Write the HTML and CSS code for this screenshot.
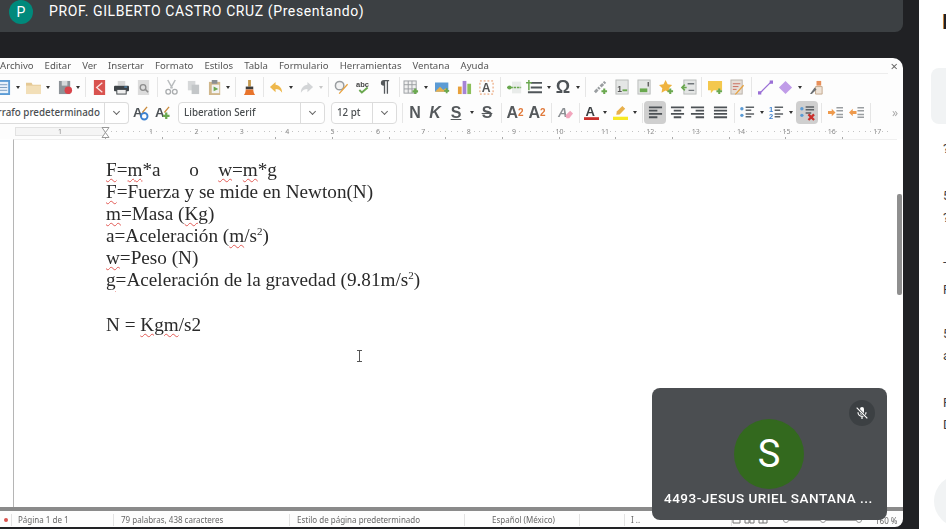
FILE: index.html
```html
<!DOCTYPE html>
<html lang="es">
  <head>
    <meta charset="UTF-8" />
    <meta name="viewport" content="width=device-width, initial-scale=1.0" />
    <title>Reunión</title>
    <link rel="stylesheet" href="styles.css">
  </head>
  <body>
    <div class="stage">
      <header class="presenter">
        <span class="presenter-avatar">P</span>
        <span class="presenter-name">PROF. GILBERTO CASTRO CRUZ (Presentando)</span>
      </header>

      <section class="writer">
        <nav class="menu">
          <span>Archivo</span><span>Editar</span><span>Ver</span><span>Insertar</span><span>Formato</span><span>Estilos</span><span>Tabla</span><span>Formulario</span><span>Herramientas</span><span>Ventana</span><span>Ayuda</span>
          <span class="close">×</span>
        </nav>

        <div class="bar bar-top">
          <span class="b"><svg viewBox="0 0 16 16"><rect x="1" y="0" width="14" height="16" fill="#5b9bd5"/><rect x="3" y="2" width="10" height="12" fill="#e8f1fa"/><path d="M4 5h8M4 8h8M4 11h8" stroke="#7a9cc0"/></svg></span>
          <span class="a"></span>
          <span class="b"><svg viewBox="0 0 16 16"><path d="M0 3h6l1 2h9v10H0z" fill="#e5c995"/><path d="M0 6h16v9H0z" fill="#f2dfb8"/></svg></span>
          <span class="a"></span>
          <span class="b ml2"><svg viewBox="0 0 16 16"><rect x="1" y="1" width="12" height="14" fill="#8d9398"/><rect x="4" y="1" width="6" height="5" fill="#d5d8da"/><circle cx="11" cy="11" r="4" fill="#d9434a"/></svg></span>
          <span class="a ml-2"></span>
          <span class="s"></span>
          <span class="b"><svg viewBox="0 0 16 16"><rect x="2" y="0" width="12" height="16" fill="#d9534f"/><path d="M11 3 5 8l6 5" fill="none" stroke="#fbe3e2" stroke-width="1.4"/></svg></span>
          <span class="b"><svg viewBox="0 0 16 16"><rect x="4" y="1" width="8" height="5" fill="#d8d8d8"/><rect x="0" y="6" width="16" height="6" rx="1" fill="#3d4347"/><rect x="3" y="10" width="10" height="5" fill="#eee" stroke="#3d4347"/><rect x="11" y="7" width="3" height="1" fill="#5aa6e0"/></svg></span>
          <span class="b"><svg viewBox="0 0 16 16"><rect x="2" y="0" width="12" height="16" fill="#dcdcdc"/><circle cx="7.5" cy="8" r="3" fill="none" stroke="#8c8c8c" stroke-width="1.4"/><path d="m10 10 3 3" stroke="#8c8c8c" stroke-width="1.6"/></svg></span>
          <span class="s"></span>
          <span class="b"><svg viewBox="0 0 16 16"><path d="M4 0l5 9M12 0 7 9" stroke="#b9bcbe" stroke-width="1.6"/><circle cx="4.5" cy="12.5" r="2.5" fill="none" stroke="#a9acae" stroke-width="1.4"/><circle cx="11.5" cy="12.5" r="2.5" fill="none" stroke="#a9acae" stroke-width="1.4"/></svg></span>
          <span class="b"><svg viewBox="0 0 16 16"><rect x="2" y="1" width="8" height="10" fill="#d6d8d9"/><rect x="6" y="5" width="8" height="10" fill="#c3c6c8"/></svg></span>
          <span class="b"><svg viewBox="0 0 16 16"><rect x="1" y="2" width="12" height="14" fill="#d0b78c"/><rect x="4" y="0" width="6" height="4" fill="#8b8f92"/><rect x="4" y="5" width="8" height="9" fill="#f2f2f2"/><path d="m6 7 5 2.500-5 2.500z" fill="#6aa84f"/></svg></span>
          <span class="a ml-2"></span>
          <span class="s"></span>
          <span class="b"><svg viewBox="0 0 16 16"><rect x="6.500" y="0" width="3" height="7" fill="#c69a4f"/><rect x="4" y="7" width="8" height="3" fill="#3c3c3c"/><path d="M2 16c1-1 2-4 2-6h8c0 2 1 5 2 6z" fill="#e8742c"/></svg></span>
          <span class="s"></span>
          <span class="b ml-1"><svg viewBox="0 0 16 16"><path d="M7 2 1 7.500 7 13V9.500c3 0 5 1 7 4 0-5-3-8-7-8.500z" fill="#eeb84c"/></svg></span>
          <span class="a"></span>
          <span class="b"><svg viewBox="0 0 16 16"><path d="M9 2l6 5.500L9 13V9.500c-3 0-5 1-7 4 0-5 3-8 7-8.500z" fill="#d3d5d7"/></svg></span>
          <span class="a faint"></span>
          <span class="s"></span>
          <span class="b ml-1"><svg viewBox="0 0 16 16"><circle cx="6" cy="6" r="4.500" fill="#f3f3f3" stroke="#9a9ea1" stroke-width="1.6"/><path d="M15 5 6 15l-1-1 9-10z" fill="#e8a13c"/></svg></span>
          <span class="b"><svg viewBox="0 0 18 16"><text x="0" y="7.500" class="t-abc">abc</text><path d="m4 11 3 3 7-6" fill="none" stroke="#6aa84f" stroke-width="2.200"/></svg></span>
          <span class="b pil">¶</span>
          <span class="s"></span>
          <span class="b ml-2"><svg viewBox="0 0 16 16"><rect x="0" y="1" width="13" height="13" fill="#f0f0f0" stroke="#9a9ea1"/><path d="M4.500 1v13M8.500 1v13M0 5h13M0 9.500h13" stroke="#9a9ea1"/><path d="M12 9v6M9 12h6" stroke="#6aa84f" stroke-width="2.400"/></svg></span>
          <span class="a"></span>
          <span class="b ml1"><svg viewBox="0 0 18 16"><rect x="0" y="2" width="16" height="11" fill="#5b9bd5"/><path d="M0 13 6 7l4 4 3-2 3 4z" fill="#e8b04c"/><path d="M14 9v6M11 12h6" stroke="#6aa84f" stroke-width="2.200"/></svg></span>
          <span class="b"><svg viewBox="0 0 16 16"><rect x="1" y="7" width="4" height="8" fill="#e8a13c"/><rect x="6" y="1" width="4" height="14" fill="#a583d6"/><rect x="11" y="4" width="4" height="11" fill="#8cbf5a"/></svg></span>
          <span class="b"><svg viewBox="0 0 16 16"><rect x="1" y="1" width="14" height="14" fill="none" stroke="#e8905a" stroke-dasharray="2 2"/><text x="3" y="13" class="t-box">A</text></svg></span>
          <span class="s"></span>
          <span class="b"><svg viewBox="0 0 18 16"><rect x="6" y="1" width="11" height="14" fill="#e9ecea"/><path d="M0 8h17" stroke="#6aa84f" stroke-width="2" stroke-dasharray="3 1"/><circle cx="3" cy="8" r="2.500" fill="#6aa84f"/></svg></span>
          <span class="b ml-2"><svg viewBox="0 0 16 16"><path d="M4 3h12M4 8h12M1 13h15" stroke="#50565a" stroke-width="2"/><path d="M2 0v6M-1 3h6M2 5v6" stroke="#6aa84f" stroke-width="1.600"/></svg></span>
          <span class="a"></span>
          <span class="b ml-1 omega">Ω</span>
          <span class="a"></span>
          <span class="s"></span>
          <span class="b ml1"><svg viewBox="0 0 16 16"><path d="M2 13 7 8M8 7l5-5" stroke="#9a9ea1" stroke-width="3" stroke-dasharray="4 1"/><path d="M12 9v6M9 12h6" stroke="#6aa84f" stroke-width="2.200"/></svg></span>
          <span class="b"><svg viewBox="0 0 16 16"><rect x="1" y="0" width="13" height="15" fill="#e4e6e5" stroke="#b8bbba"/><text x="2.500" y="13" class="t-num">1</text><path d="M8 11h5" stroke="#6aa84f" stroke-width="2"/></svg></span>
          <span class="b"><svg viewBox="0 0 16 16"><rect x="1" y="0" width="13" height="15" fill="#e4e6e5" stroke="#b8bbba"/><rect x="3" y="9" width="8" height="4" fill="#6aa84f"/><path d="M12 2v5" stroke="#555" stroke-width="1.400"/></svg></span>
          <span class="b"><svg viewBox="0 0 16 16"><path d="M7 0l2.200 4.600 4.800.700-3.500 3.400.8 4.800L7 11.200 2.700 13.500l.8-4.800L0 5.300l4.800-.700z" fill="#efb33f"/><path d="M12 9v6M9 12h6" stroke="#6aa84f" stroke-width="2.200"/></svg></span>
          <span class="b ml1"><svg viewBox="0 0 16 16"><rect x="2" y="0" width="13" height="15" fill="#e4e6e5" stroke="#b8bbba"/><path d="M6 4h7M7 11h6" stroke="#70767a" stroke-width="1.400"/><path d="M0 8h5M3 5 0 8l3 3" fill="none" stroke="#6aa84f" stroke-width="1.800"/></svg></span>
          <span class="s ml-2"></span>
          <span class="b"><svg viewBox="0 0 16 16"><path d="M0 1h15v10H6l-3 3v-3H0z" fill="#f4c84d"/><path d="M12 9v6M9 12h6" stroke="#6aa84f" stroke-width="2.200"/></svg></span>
          <span class="b"><svg viewBox="0 0 16 16"><rect x="1" y="0" width="12" height="15" fill="#e6dfd8" stroke="#b8b0a8"/><path d="M3 4h8M3 7h6M3 10h4" stroke="#c96a5a"/><path d="m15 6-8 9-2 1 1-2 8-9z" fill="#e8a13c"/></svg></span>
          <span class="s"></span>
          <span class="b"><svg viewBox="0 0 16 16"><path d="M2 14 14 2" stroke="#9a6fd6" stroke-width="1.400"/><rect x="0" y="12" width="3.500" height="3.500" fill="#9a6fd6"/><rect x="12.500" y="0.500" width="3.500" height="3.500" fill="#9a6fd6"/></svg></span>
          <span class="b ml-2"><svg viewBox="0 0 16 16"><path d="M8 1l7 7-7 7-7-7z" fill="#c09ce8"/></svg></span>
          <span class="a"></span>
          <span class="b ml1"><svg viewBox="0 0 16 16"><path d="M8 1h5v5H8z" fill="#e8905a"/><path d="M7 7h7v8H7z" fill="#efe4d8" stroke="#c2a78c"/><path d="M1 15 6 8l2 2-5 5z" fill="#6b6f72"/></svg></span>
        </div>

        <div class="bar bar-format">
          <div class="combo combo-style">
            <span class="combo-text clip-left">Párrafo predeterminado</span>
            <span class="combo-arrow"></span>
          </div>
          <span class="b"><svg viewBox="0 0 16 16"><text x="0" y="13" class="t-big">A</text><circle cx="12" cy="12" r="3.500" fill="none" stroke="#3e82d0" stroke-width="2"/><path d="m10 8 5-6" stroke="#c98a3c" stroke-width="1.400"/></svg></span>
          <span class="b"><svg viewBox="0 0 16 16"><text x="0" y="13" class="t-big">A</text><path d="M12 8v7M8.500 11.500h7" stroke="#6aa84f" stroke-width="2.400"/><path d="m10 8 5-6" stroke="#c98a3c" stroke-width="1.400"/></svg></span>
          <div class="combo combo-font">
            <span class="combo-text">Liberation Serif</span>
            <span class="combo-arrow"></span>
          </div>
          <div class="combo combo-size">
            <span class="combo-text">12 pt</span>
            <span class="combo-arrow"></span>
          </div>
          <span class="s s-first"></span>
          <span class="b g-n">N</span>
          <span class="b g-k">K</span>
          <span class="b g-s">S</span>
          <span class="a ml1"></span>
          <span class="b g-strike">S</span>
          <span class="s"></span>
          <span class="b g-a">A<sup>2</sup></span>
          <span class="b g-a">A<sub>2</sub></span>
          <span class="s"></span>
          <span class="b"><svg viewBox="0 0 16 16"><text x="0" y="13" class="t-big t-grey">A</text><path d="m8 11 5-5 3 3-4 5H9z" fill="#f2a6bd"/></svg></span>
          <span class="s"></span>
          <span class="b ml-2"><svg viewBox="0 0 16 16"><text x="1.500" y="11.500" class="t-big t-dark">A</text><rect x="0" y="13" width="16" height="3" fill="#c9302c"/></svg></span>
          <span class="a ml-1"></span>
          <span class="b"><svg viewBox="0 0 16 16"><path d="M10 1l3 3-6 6-3.500.5.500-3.500z" fill="#e8b04c"/><rect x="0" y="12.500" width="16" height="3.500" fill="#f7e925"/></svg></span>
          <span class="a"></span>
          <span class="s"></span>
          <span class="b on ml-1"><svg viewBox="0 0 16 16"><path d="M1 2.500h14M1 6h9M1 9.500h14M1 13h9" stroke="#4d5256" stroke-width="2"/></svg></span>
          <span class="b"><svg viewBox="0 0 16 16"><path d="M1 2.500h14M4 6h8M1 9.500h14M4 13h8" stroke="#4d5256" stroke-width="2"/></svg></span>
          <span class="b ml-2"><svg viewBox="0 0 16 16"><path d="M1 2.500h14M6 6h9M1 9.500h14M6 13h9" stroke="#4d5256" stroke-width="2"/></svg></span>
          <span class="b ml1"><svg viewBox="0 0 16 16"><path d="M1 2.500h14M1 6h14M1 9.500h14M1 13h14" stroke="#4d5256" stroke-width="2"/></svg></span>
          <span class="s"></span>
          <span class="b ml-1"><svg viewBox="0 0 16 16"><circle cx="2" cy="4" r="1.800" fill="#5b9bd5"/><circle cx="2" cy="11" r="1.800" fill="#5b9bd5"/><path d="M6 2.500h9M6 5.500h6M6 9.500h9M6 12.500h6" stroke="#5d6266" stroke-width="1.600"/></svg></span>
          <span class="a"></span>
          <span class="b ml-1"><svg viewBox="0 0 16 16"><text x="0" y="7" class="t-list">1</text><text x="0" y="15" class="t-list">2</text><path d="M6 2.500h9M6 5.500h6M6 9.500h9M6 12.500h6" stroke="#5d6266" stroke-width="1.600"/></svg></span>
          <span class="a"></span>
          <span class="b on ml1"><svg viewBox="0 0 16 16"><circle cx="2" cy="4" r="1.800" fill="#5b9bd5"/><circle cx="2" cy="11" r="1.800" fill="#5b9bd5"/><path d="M6 2h9M6 5h9M6 8.500h6" stroke="#5d6266" stroke-width="1.600"/><path d="m9 10 6 6m0-6-6 6" stroke="#c9302c" stroke-width="2.400"/></svg></span>
          <span class="s"></span>
          <span class="b"><svg viewBox="0 0 16 16"><path d="M9 3h7M9 6h7M9 10h7M9 13h7" stroke="#9a9ea1" stroke-width="1.600"/><path d="M0 6.500h4V4l4 4-4 4V9.500H0z" fill="#ee9a4d"/></svg></span>
          <span class="b ml-1"><svg viewBox="0 0 16 16"><path d="M9 3h7M9 6h7M9 10h7M9 13h7" stroke="#9a9ea1" stroke-width="1.600"/><path d="M8 6.500H4V4L0 8l4 4V9.500h4z" fill="#ee9a4d"/></svg></span>
          <span class="s"></span>
          <span class="more">»</span>
        </div>

        <div class="ruler">
          <div class="ruler-margin"><span>1</span></div>
          <svg class="ruler-mark" viewBox="0 0 9 11"><path d="M1 .5h7L1 10.500h7z" fill="#fff" stroke="#999"/></svg>
          <div class="ruler-body">
            <span>1</span><span>2</span><span>3</span><span>4</span><span>5</span><span>6</span><span>7</span><span>8</span><span>9</span><span>10</span><span>11</span><span>12</span><span>13</span><span>14</span><span>15</span><span>16</span><span>17</span>
          </div>
        </div>

        <div class="doc-area">
          <article class="page">
            <p class="ln"><u>F</u>=<u>m</u>*a      o    <u>w</u>=<u>m</u>*g</p>
            <p class="ln"><u>F</u>=Fuerza y se mide en Newton(N)</p>
            <p class="ln"><u>m</u>=Masa (<u>Kg</u>)</p>
            <p class="ln">a=Aceleración (<u>m</u>/s<sup>2</sup>)</p>
            <p class="ln"><u>w</u>=Peso (N)</p>
            <p class="ln"><u>g</u>=Aceleración de la gravedad (9.81m/s<sup>2</sup>)</p>
            <p class="ln">&nbsp;</p>
            <p class="ln">N = <u>Kgm</u>/s2</p>
          </article>
          <svg class="ibeam" viewBox="0 0 7 12"><path d="M1 .5h5M3.500.5v11M1 11.500h5" fill="none" stroke="#555"/></svg>
          <div class="vscroll"><div class="vthumb"></div></div>
        </div>

        <div class="hscroll"></div>

        <footer class="status">
          <span class="st st-mark"><i></i></span>
          <span class="st st-page">Página 1 de 1</span>
          <span class="st st-words">79 palabras, 438 caracteres</span>
          <span class="st st-style">Estilo de página predeterminado</span>
          <span class="st st-lang">Español (México)</span>
          <span class="st st-empty"></span>
          <span class="st st-ins">I ..</span>
          <span class="st st-views">
            <svg viewBox="0 0 36 8"><path d="M1 1h7v6H1zM13 1h4v6h-4zM18 1h4v6h-4zM27 1h8v6h-8zM31 1v6" fill="none" stroke="#777"/></svg>
          </span>
          <span class="zoom-slider"><i></i><i></i><i></i></span>
          <span class="st-zoom">160 %</span>
        </footer>
      </section>
    </div>

    <aside class="side">
      <div class="side-title">I</div>
      <div class="side-note"></div>
      <p class="msg msg-1">?</p>
      <p class="msg msg-2">5</p>
      <p class="msg">?</p>
      <p class="msg msg-3">-</p>
      <p class="msg msg-4">F</p>
      <p class="msg msg-5">5</p>
      <p class="msg">a</p>
      <p class="msg msg-6">F</p>
      <p class="msg">D</p>
      <div class="side-fab"></div>
    </aside>

    <div class="tile">
      <span class="tile-mic">
        <svg viewBox="0 0 24 24"><path d="M12 3a3 3 0 0 0-3 3v6a3 3 0 0 0 6 0V6a3 3 0 0 0-3-3z" fill="#fff"/><path d="M6 11a6 6 0 0 0 12 0M12 17v4" fill="none" stroke="#fff" stroke-width="1.800"/><path d="m4 4 16 16" stroke="#3c4043" stroke-width="4"/><path d="m4 4 16 16" stroke="#fff" stroke-width="1.800"/></svg>
      </span>
      <span class="tile-avatar">S</span>
      <span class="tile-name">4493-JESUS URIEL SANTANA ...</span>
    </div>
  </body>
</html>
```

FILE: styles.css
```css
html,
body {
  height: 100%;
}
body {
  margin: 0;
  width: 946px;
  height: 529px;
  overflow: hidden;
  position: relative;
  display: flex;
  background: #202124;
  font-family: Roboto, "Liberation Sans", sans-serif;
}
.stage {
  width: 903px;
  margin-right: 16px;
  padding-bottom: 2px;
  box-sizing: border-box;
  display: flex;
  flex-direction: column;
  gap: 26px;
}

/* presenter bar */
.presenter {
  height: 32px;
  flex: none;
  display: flex;
  align-items: flex-start;
  background: #3c4043;
  border-bottom-right-radius: 8px;
  color: #fff;
}
.presenter-avatar {
  width: 24px;
  height: 24px;
  margin-left: 9px;
  border-radius: 50%;
  background: #00897b;
  font-size: 14px;
  line-height: 24px;
  text-align: center;
}
.presenter-name {
  margin-left: 16px;
  font-size: 14px;
  line-height: 22px;
  letter-spacing: 0.6px;
  white-space: nowrap;
}

/* libreoffice window */
.writer {
  flex: 1;
  min-height: 0;
  display: flex;
  flex-direction: column;
  background: #fdfdfd;
  border-radius: 0 10px 8px 0;
  overflow: hidden;
  font-family: "Noto Sans", "Open Sans", sans-serif;
  color: #555;
}
.menu {
  height: 15px;
  flex: none;
  display: flex;
  align-items: center;
  gap: 11px;
  margin-right: 15px;
  border-bottom: 1px solid #ededed;
  font-size: 9.6px;
  white-space: nowrap;
  filter: blur(0.3px);
}
.close {
  margin-left: auto;
  margin-right: -10px;
  font-size: 13px;
  color: #666;
}
.bar {
  display: flex;
  align-items: center;
  flex: none;
  filter: blur(0.35px);
}
.bar-top {
  height: 26px;
  margin-left: -8px;
}
.bar-format {
  height: 25px;
}
.b {
  width: 22px;
  height: 22px;
  flex: none;
  display: flex;
  align-items: center;
  justify-content: center;
}
.b svg {
  width: 15px;
  height: 15px;
  overflow: visible;
}
.a {
  width: 8px;
  flex: none;
  display: flex;
  justify-content: center;
}
.a::after {
  content: "";
  border: 2.5px solid transparent;
  border-top: 3px solid #333;
  border-bottom: 0;
}
.a.faint::after {
  border-top-color: #c8c8c8;
}
.s {
  width: 6px;
  height: 20px;
  flex: none;
  display: flex;
  justify-content: center;
}
.s::after {
  content: "";
  width: 1px;
  background: #e6e6e6;
}
.s-first {
  margin-left: 2px;
}
.ml1 {
  margin-left: 1px;
}
.ml2 {
  margin-left: 2px;
}
.ml-1 {
  margin-left: -1px;
}
.ml-2 {
  margin-left: -2px;
}
.on {
  background: #cfcfcf;
  border-radius: 4px;
  height: 23px;
}
.pil {
  font: bold 17px "Liberation Sans", sans-serif;
  color: #55595c;
}
.omega {
  font: bold 18px "Liberation Sans", sans-serif;
  color: #4d5256;
}
.t-abc {
  font: bold 9px "Liberation Sans", sans-serif;
  fill: #444;
}
.t-box {
  font: bold 13px "Liberation Sans", sans-serif;
  fill: #555;
}
.t-num {
  font: bold 9px "Liberation Sans", sans-serif;
  fill: #555;
}
.t-big {
  font: bold 14px "Liberation Sans", sans-serif;
  fill: #4d5256;
}
.t-grey {
  fill: #8c9094;
  font-style: italic;
}
.t-dark {
  fill: #3c4043;
}
.t-list {
  font: bold 8px "Liberation Sans", sans-serif;
  fill: #3e82d0;
}

/* combos */
.combo {
  height: 22px;
  flex: none;
  display: flex;
  box-sizing: border-box;
  background: #fff;
  border: 1px solid #dcdcdc;
  border-radius: 4px;
  font-size: 9.8px;
  font-weight: 500;
  line-height: 20px;
  color: #4b4f52;
  overflow: hidden;
}
.combo-text {
  flex: 1;
  padding-left: 5px;
  white-space: nowrap;
  overflow: hidden;
}
.clip-left {
  padding-left: 0;
  text-indent: -13px;
}
.combo-arrow {
  width: 23px;
  flex: none;
  border-left: 1px solid #dcdcdc;
  display: flex;
  align-items: center;
  justify-content: center;
}
.combo-arrow::after {
  content: "";
  width: 4px;
  height: 4px;
  margin-top: -3px;
  border-right: 1px solid #666;
  border-bottom: 1px solid #666;
  transform: rotate(45deg);
}
.combo-style {
  width: 130px;
  margin-left: -1px;
  border-left: 0;
  border-radius: 0 4px 4px 0;
}
.combo-font {
  width: 147px;
  margin-left: 5px;
}
.combo-size {
  width: 66px;
  margin-left: 6px;
}
.g-n,
.g-k,
.g-s,
.g-strike,
.g-a {
  font: bold 16px "Liberation Sans", sans-serif;
  color: #55595c;
}
.g-n,
.g-k {
  width: 20px;
}
.g-k {
  font-style: italic;
}
.g-s {
  text-decoration: underline;
}
.g-strike {
  text-decoration: line-through;
}
.g-a sup,
.g-a sub {
  font-size: 10px;
  line-height: 0;
  color: #e0793a;
}
.more {
  margin-left: 19px;
  font-size: 12px;
  color: #aaa;
}

/* ruler */
.ruler {
  height: 12px;
  flex: none;
  margin-top: 2px;
  padding-left: 15px;
  margin-right: 15px;
  display: flex;
  font-size: 7px;
  line-height: 10px;
  color: #8a8a8a;
  background:
    repeating-linear-gradient(90deg, #aaa 0 1px, transparent 1px 56.7px) 105.3px bottom / 100% 2px no-repeat;
  filter: blur(0.3px);
}
.ruler-margin {
  width: 90px;
  height: 9px;
  flex: none;
  box-sizing: border-box;
  text-align: center;
  border: 1px solid #e2e2e2;
  line-height: 7px;
  background: #f5f5f5;
}
.ruler-mark {
  width: 9px;
  height: 11px;
  flex: none;
  margin: 0 -4.5px;
  position: relative;
}
.ruler-body {
  flex: 1;
  min-width: 0;
  padding-left: 23.3px;
  display: flex;
  background:
    repeating-linear-gradient(90deg, #c4c4c4 0 1px, transparent 1px 5.67px) 0 4px / 100% 1px no-repeat;
}
.ruler-body span {
  width: 45.4px;
  flex: none;
  text-align: center;
}

/* document */
.doc-area {
  flex: 1;
  min-height: 0;
  display: flex;
  position: relative;
  background: #fff;
}
.page {
  flex: 1;
  margin-left: 13px;
  padding: 19px 0 0 92px;
  border-left: 1px solid #b5b5b5;
  border-top: 1px solid #efefef;
  font: 19.2px/22.1px "Liberation Serif", serif;
  color: #2a2a2a;
  filter: blur(0.25px);
}
.ln {
  margin: 0;
  height: 22.1px;
  white-space: pre;
}
.ln u {
  text-decoration: underline wavy #e25a55 1px;
  text-underline-offset: 2px;
}
.ln sup {
  font-size: 11px;
  line-height: 0;
}
.ibeam {
  position: absolute;
  left: 356px;
  top: 211px;
  width: 7px;
  height: 12px;
}
.vscroll {
  width: 5px;
  flex: none;
  margin-right: 1px;
  padding-top: 55px;
}
.vthumb {
  height: 101px;
  background: #8f8f8f;
  border-radius: 2px;
}
.hscroll {
  height: 4px;
  flex: none;
  background: #8a8a8a;
}

/* status bar */
.status {
  height: 16px;
  flex: none;
  box-sizing: border-box;
  padding-top: 2px;
  display: flex;
  align-items: center;
  font-size: 8px;
  color: #666;
  white-space: nowrap;
  filter: blur(0.3px);
}
.st {
  box-sizing: border-box;
  height: 12px;
  line-height: 12px;
  flex: none;
  border-right: 1px solid #e2e2e2;
}
.st-mark {
  width: 12px;
  display: flex;
  align-items: center;
  justify-content: center;
}
.st-mark i {
  width: 4px;
  height: 4px;
  border-radius: 50%;
  background: #d9534f;
}
.st-page {
  width: 102px;
  padding-left: 6px;
}
.st-words {
  width: 176px;
  padding-left: 7px;
}
.st-style {
  width: 175px;
  padding-left: 7px;
}
.st-lang {
  width: 115px;
  padding-left: 27px;
}
.st-empty {
  width: 45px;
}
.st-ins {
  width: 107px;
  padding-left: 6px;
}
.st-views {
  width: 36px;
  border-right: 0;
  display: flex;
  align-items: center;
}
.st-views svg {
  width: 36px;
  height: 8px;
}
.zoom-slider {
  width: 79px;
  height: 1px;
  flex: none;
  margin: 0 13px 0 15px;
  background: #999;
  display: flex;
  align-items: center;
  justify-content: space-between;
}
.zoom-slider i {
  width: 6px;
  height: 6px;
  flex: none;
  box-sizing: border-box;
  border: 1px solid #999;
  border-radius: 50%;
  background: #fdfdfd;
}
.st-zoom {
  flex: none;
}

/* participant tile */
.tile {
  position: absolute;
  left: 652px;
  top: 388px;
  width: 235px;
  height: 132px;
  background: #4b4e51;
  border-radius: 8px;
  color: #fff;
}
.tile-mic {
  position: absolute;
  right: 12px;
  top: 12px;
  width: 26px;
  height: 26px;
  border-radius: 50%;
  background: #3c4043;
  display: flex;
  align-items: center;
  justify-content: center;
}
.tile-mic svg {
  width: 16px;
  height: 16px;
}
.tile-avatar {
  position: absolute;
  left: 82px;
  top: 31px;
  width: 70px;
  height: 70px;
  border-radius: 50%;
  background: #33691e;
  font-size: 38px;
  line-height: 70px;
  text-align: center;
}
.tile-name {
  position: absolute;
  left: 12px;
  top: 102px;
  font-size: 13.5px;
  font-weight: 500;
  line-height: 16px;
  letter-spacing: 0.5px;
  white-space: nowrap;
}

/* chat panel */
.side {
  flex: 1;
  min-width: 0;
  background: #fff;
  overflow: hidden;
  position: relative;
  padding-top: 13px;
  box-sizing: border-box;
  font-size: 13px;
  line-height: 22px;
  color: #3c4043;
  white-space: nowrap;
}
.side-title {
  height: 19px;
  padding-left: 23px;
  font-size: 20px;
  font-weight: 700;
  line-height: 19px;
  color: #202124;
}
.side-note {
  height: 56px;
  margin: 36px -20px 0 12px;
  border-radius: 8px;
  background: #f1f3f4;
}
.msg {
  margin: 0;
  padding-left: 24px;
}
.msg-1 {
  margin-top: 14px;
}
.msg-2 {
  margin-top: 25px;
}
.msg-3 {
  margin-top: 22px;
}
.msg-4 {
  margin-top: 6px;
}
.msg-5 {
  margin-top: 22px;
}
.msg-6 {
  margin-top: 25px;
}
.side-fab {
  position: absolute;
  left: 15px;
  top: 475px;
  width: 52px;
  height: 52px;
  border-radius: 50%;
  background: #f1f3f4;
}
```
